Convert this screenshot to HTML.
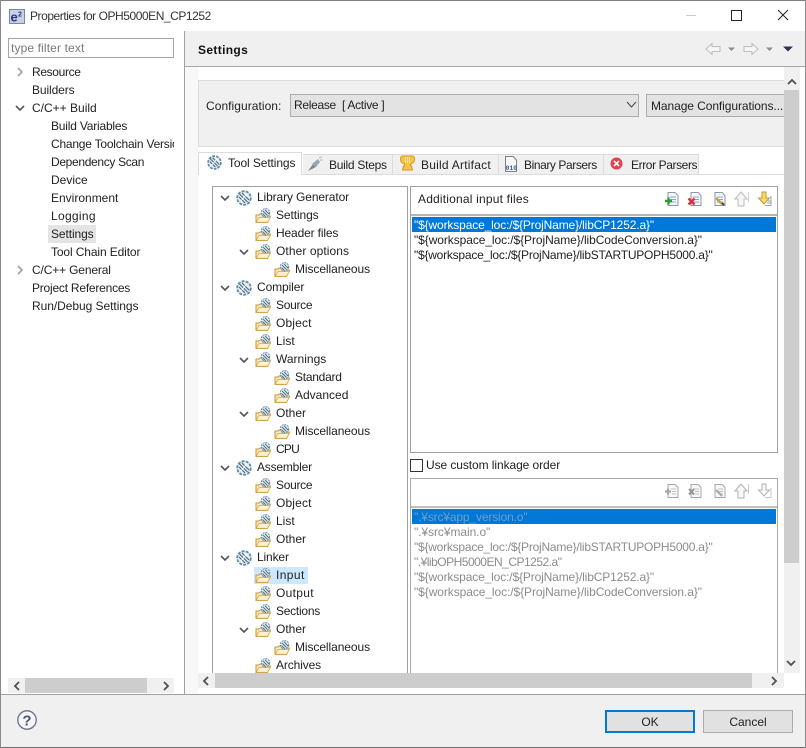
<!DOCTYPE html>
<html><head><meta charset="utf-8"><title>Properties</title>
<style>
html,body{margin:0;padding:0;background:#fff}
#w{position:relative;width:806px;height:748px;overflow:hidden;background:#fff;font-family:"Liberation Sans",sans-serif;font-size:12px;color:#222}
#w div,#w span,#w svg{position:absolute}
.t{white-space:nowrap;line-height:16px;height:16px}
.g{color:#8c8c8c}
</style></head><body><div id="w">
<svg width="0" height="0" style="left:0;top:0"><defs>
<symbol id="tool" viewBox="0 0 16 16"><circle cx="8" cy="8" r="6.8" fill="#e4eef5" stroke="#5f8aa8" stroke-width="1.8" stroke-dasharray="3 1.2"/><path d="M3.5 4 L11.5 12 M6 3 L13 10 M3 7 L9 13" stroke="#4f6b7b" stroke-width="1.2" fill="none"/><path d="M11 3.5 L5 11" stroke="#fff" stroke-width="1"/></symbol>
<symbol id="fold" viewBox="0 0 16 16"><path d="M1 14.5 L1 7 L4 7 L5 6 L8 6 L8 8 L15.5 8 L12.5 14.5 Z" fill="#fbe5b0" stroke="#c9973f" stroke-width="1"/><path d="M1.2 14.3 L4 9.5 L15.3 9.5 L12.5 14.3 Z" fill="#fdf1d0" stroke="#d6a850" stroke-width=".8"/><circle cx="10.5" cy="4.8" r="4.2" fill="#e8f0f6" stroke="#5f8aa8" stroke-width="1" stroke-dasharray="2 .8"/><path d="M8 3 L12.5 7.5 M10 1.8 L14 6 M7.5 5.5 L10.5 8.5" stroke="#4f6b7b" stroke-width="1"/></symbol>
<symbol id="ch" viewBox="0 0 10 10"><path d="M1 3 L5 7 L9 3" fill="none" stroke="#555" stroke-width="1.6"/></symbol>
<symbol id="cr" viewBox="0 0 10 10"><path d="M3 1 L7 5 L3 9" fill="none" stroke="#a0a0a0" stroke-width="1.6"/></symbol>
<symbol id="dc" viewBox="0 0 16 16"><path d="M4 1.5 H11 L14 4.5 V14.5 H4 Z" fill="#f4f6fa" stroke="#8a9aa5"/><path d="M6 6 H12 M6 8.5 H12 M6 11 H12" stroke="#8fa6c8"/></symbol>
<symbol id="dg" viewBox="0 0 16 16"><path d="M4 1.5 H11 L14 4.5 V14.5 H4 Z" fill="#f8f8f8" stroke="#a8a8a8"/><path d="M7 6 H12 M8 8.5 H12 M8 11 H12" stroke="#c0c0c0"/></symbol>
</defs></svg>

<!-- frame and title -->
<div style="left:0;top:0;width:806px;height:1px;background:#7f7f7f"></div>
<svg style="left:9px;top:9px" width="16" height="15"><rect x=".5" y=".5" width="15" height="14" fill="#c6d0e6" stroke="#7a86a8"/><text x="1.5" y="12.5" font-family="Liberation Sans" font-weight="700" font-size="13" fill="#28387f">e</text><text x="9" y="7.5" font-family="Liberation Sans" font-weight="700" font-size="7" fill="#28387f">2</text></svg>
<span class="t" style="left:30px;top:8px;color:#333;letter-spacing:-.45px">Properties for OPH5000EN_CP1252</span>
<div style="left:686px;top:15px;width:10px;height:1px;background:#ccc"></div>
<div style="left:731px;top:10px;width:9px;height:9px;border:1px solid #222"></div>
<svg style="left:777px;top:9px" width="12" height="12"><path d="M1 1 L11 11 M11 1 L1 11" stroke="#222" stroke-width="1"/></svg>

<!-- left pane -->
<div style="left:8px;top:38px;width:164px;height:18px;border:1px solid #a5a5a5"></div>
<span class="t" style="left:11px;top:40px;color:#7a7a7a;letter-spacing:.13px">type filter text</span>
<div style="left:48px;top:225px;width:48px;height:18px;background:#e4e4e4"></div>
<svg style="left:15px;top:67px" width="10" height="10"><use href="#cr"/></svg>
<svg style="left:15px;top:103px" width="10" height="10"><use href="#ch"/></svg>
<svg style="left:15px;top:265px" width="10" height="10"><use href="#cr"/></svg>
<span class="t" style="left:32px;top:64px;letter-spacing:-.35px">Resource</span>
<span class="t" style="left:32px;top:82px;letter-spacing:-.1px">Builders</span>
<span class="t" style="left:32px;top:100px">C/C++ Build</span>
<span class="t" style="left:51px;top:118px;letter-spacing:-.2px">Build Variables</span>
<div style="left:51px;top:136px;width:123px;height:16px;overflow:hidden"><span class="t" style="left:0;top:0;letter-spacing:-.22px">Change Toolchain Version</span></div>
<span class="t" style="left:51px;top:154px;letter-spacing:-.33px">Dependency Scan</span>
<span class="t" style="left:51px;top:172px">Device</span>
<span class="t" style="left:51px;top:190px">Environment</span>
<span class="t" style="left:51px;top:208px;letter-spacing:.3px">Logging</span>
<span class="t" style="left:51px;top:226px;letter-spacing:-.1px">Settings</span>
<span class="t" style="left:51px;top:244px;letter-spacing:-.12px">Tool Chain Editor</span>
<span class="t" style="left:32px;top:262px;letter-spacing:-.15px">C/C++ General</span>
<span class="t" style="left:32px;top:280px;letter-spacing:-.22px">Project References</span>
<span class="t" style="left:32px;top:298px;letter-spacing:-.05px">Run/Debug Settings</span>
<div style="left:8px;top:678px;width:166px;height:15px;background:#f0f0f0"></div>
<div style="left:25px;top:678px;width:122px;height:15px;background:#cdcdcd"></div>
<svg style="left:12px;top:681px" width="10" height="10"><path d="M7 1 L3 5 L7 9" fill="none" stroke="#505050" stroke-width="1.8"/></svg>
<svg style="left:161px;top:681px" width="10" height="10"><path d="M3 1 L7 5 L3 9" fill="none" stroke="#505050" stroke-width="1.8"/></svg>
<div style="left:184px;top:31px;width:1px;height:664px;background:#a0a0a0"></div>

<!-- right pane header -->
<div style="left:185px;top:31px;width:620px;height:35px;background:#f0f0f0"></div>
<div style="left:185px;top:66px;width:620px;height:1px;background:#a8a8a8"></div>
<span class="t" style="left:198px;top:42px;font-weight:700;color:#111;letter-spacing:.35px">Settings</span>
<svg style="left:705px;top:42px" width="90" height="14"><path d="M1 7 L7 1.5 V4.5 H15 V9.5 H7 V12.5 Z" fill="#f6f6f6" stroke="#bdbdbd"/><path d="M23 5.5 H30 L26.5 9 Z" fill="#8c8c8c"/><path d="M53 7 L47 1.5 V4.5 H39 V9.5 H47 V12.5 Z" fill="#f6f6f6" stroke="#bdbdbd"/><path d="M61 5.5 H68 L64.5 9 Z" fill="#8c8c8c"/><path d="M78 4.5 H88 L83 9.5 Z" fill="#3a2c52"/></svg>
<div style="left:185px;top:67px;width:620px;height:628px;background:#fff"></div>
<div style="left:185px;top:67px;width:13px;height:628px;background:#f8f8f8"></div>

<!-- config group -->
<div style="left:198px;top:80px;width:586px;height:65px;background:#f0f0f0;border:1px solid #dcdcdc;border-right:0"></div>
<span class="t" style="left:206px;top:98px;letter-spacing:.05px">Configuration:</span>
<div style="left:290px;top:94px;width:347px;height:21px;background:#e3e3e3;border:1px solid #adadad"></div>
<span class="t" style="left:294px;top:97px;letter-spacing:-.3px">Release&nbsp; [ Active ]</span>
<svg style="left:626px;top:101px" width="11" height="8"><path d="M1 1 L5.5 6 L10 1" fill="none" stroke="#444" stroke-width="1"/></svg>
<div style="left:646px;top:94px;width:140px;height:21px;background:#e3e3e3;border:1px solid #adadad"></div>
<span class="t" style="left:651px;top:98px;width:133px;overflow:hidden;letter-spacing:-.08px">Manage Configurations...</span>

<!-- tabs -->
<div style="left:303px;top:154px;width:396px;height:20px;background:#f0f0f0;border-top:1px solid #dcdcdc;border-right:1px solid #dcdcdc;box-sizing:border-box"></div>
<div style="left:198px;top:174px;width:587px;height:1px;background:#dcdcdc"></div>
<div style="left:198px;top:152px;width:104px;height:23px;background:#fff;border:1px solid #dcdcdc;border-bottom:0;box-sizing:border-box"></div>
<div style="left:392px;top:154px;width:1px;height:20px;background:#dcdcdc"></div>
<div style="left:498px;top:154px;width:1px;height:20px;background:#dcdcdc"></div>
<div style="left:603px;top:154px;width:1px;height:20px;background:#dcdcdc"></div>
<svg style="left:207px;top:155px" width="15" height="15"><use href="#tool"/></svg>
<span class="t" style="left:228px;top:155px;letter-spacing:-.1px">Tool Settings</span>
<svg style="left:307px;top:156px" width="16" height="16"><path d="M1 15 L6 8 L9 11 Z" fill="#7d8a96"/><path d="M5 8 L11 3 L13 6 L9 11 Z" fill="#9aa6b2"/><path d="M12 2 L15 1 M13 4 L16 4" stroke="#b4bcc4"/></svg>
<span class="t" style="left:329px;top:157px;letter-spacing:-.27px">Build Steps</span>
<svg style="left:400px;top:155px" width="15" height="16"><path d="M3 1 H12 Q14.5 1 14.5 4 Q14.5 8 10.5 9 V11 H11.5 L12.5 15 H2.5 L3.5 11 H4.5 V9 Q.5 8 .5 4 Q.5 1 3 1 Z" fill="#f6c443" stroke="#d99a20"/><path d="M5.5 2 V8 M7.5 2 V8 M9.5 2 V8" stroke="#fbe6a0"/></svg>
<span class="t" style="left:421px;top:157px;letter-spacing:.23px">Build Artifact</span>
<svg style="left:504px;top:156px" width="14" height="16"><path d="M1.5 .5 H9 L12.5 4 V15.5 H1.5 Z" fill="#f7f7f7" stroke="#75828f"/><text x="1.5" y="14" font-family="Liberation Mono" font-size="6.5" font-weight="700" fill="#3c5a78">010</text></svg>
<span class="t" style="left:524px;top:157px;letter-spacing:-.42px">Binary Parsers</span>
<svg style="left:610px;top:157px" width="13" height="13"><circle cx="6.5" cy="6.5" r="6" fill="#e2434b"/><path d="M4 4 L9 9 M9 4 L4 9" stroke="#fff" stroke-width="1.6"/></svg>
<span class="t" style="left:631px;top:157px;letter-spacing:-.4px">Error Parsers</span>

<!-- tree panel -->
<div style="left:212px;top:186px;width:194px;height:486px;border:1px solid #a0a0a0;border-bottom:0;overflow:hidden;background:#fff">
<div style="left:41px;top:380px;width:54px;height:17px;background:#cce8ff"></div>
<svg style="left:7px;top:6px" width="10" height="10"><use href="#ch"/></svg>
<svg style="left:26px;top:60px" width="10" height="10"><use href="#ch"/></svg>
<svg style="left:7px;top:96px" width="10" height="10"><use href="#ch"/></svg>
<svg style="left:26px;top:168px" width="10" height="10"><use href="#ch"/></svg>
<svg style="left:26px;top:222px" width="10" height="10"><use href="#ch"/></svg>
<svg style="left:7px;top:276px" width="10" height="10"><use href="#ch"/></svg>
<svg style="left:7px;top:366px" width="10" height="10"><use href="#ch"/></svg>
<svg style="left:26px;top:438px" width="10" height="10"><use href="#ch"/></svg>

<svg style="left:23px;top:3px" width="16" height="16"><use href="#tool"/></svg><span class="t" style="left:44px;top:2px;letter-spacing:-.12px">Library Generator</span>
<svg style="left:42px;top:21px" width="16" height="16"><use href="#fold"/></svg><span class="t" style="left:63px;top:20px;letter-spacing:-.1px">Settings</span>
<svg style="left:42px;top:39px" width="16" height="16"><use href="#fold"/></svg><span class="t" style="left:63px;top:38px;letter-spacing:-.15px">Header files</span>
<svg style="left:42px;top:57px" width="16" height="16"><use href="#fold"/></svg><span class="t" style="left:63px;top:56px;letter-spacing:.08px">Other options</span>
<svg style="left:61px;top:75px" width="16" height="16"><use href="#fold"/></svg><span class="t" style="left:82px;top:74px;letter-spacing:-.08px">Miscellaneous</span>
<svg style="left:23px;top:93px" width="16" height="16"><use href="#tool"/></svg><span class="t" style="left:44px;top:92px;letter-spacing:-.1px">Compiler</span>
<svg style="left:42px;top:111px" width="16" height="16"><use href="#fold"/></svg><span class="t" style="left:63px;top:110px;letter-spacing:-.3px">Source</span>
<svg style="left:42px;top:129px" width="16" height="16"><use href="#fold"/></svg><span class="t" style="left:63px;top:128px;letter-spacing:.15px">Object</span>
<svg style="left:42px;top:147px" width="16" height="16"><use href="#fold"/></svg><span class="t" style="left:63px;top:146px">List</span>
<svg style="left:42px;top:165px" width="16" height="16"><use href="#fold"/></svg><span class="t" style="left:63px;top:164px">Warnings</span>
<svg style="left:61px;top:183px" width="16" height="16"><use href="#fold"/></svg><span class="t" style="left:82px;top:182px;letter-spacing:-.25px">Standard</span>
<svg style="left:61px;top:201px" width="16" height="16"><use href="#fold"/></svg><span class="t" style="left:82px;top:200px">Advanced</span>
<svg style="left:42px;top:219px" width="16" height="16"><use href="#fold"/></svg><span class="t" style="left:63px;top:218px">Other</span>
<svg style="left:61px;top:237px" width="16" height="16"><use href="#fold"/></svg><span class="t" style="left:82px;top:236px;letter-spacing:-.08px">Miscellaneous</span>
<svg style="left:42px;top:255px" width="16" height="16"><use href="#fold"/></svg><span class="t" style="left:63px;top:254px;letter-spacing:-.8px">CPU</span>
<svg style="left:23px;top:273px" width="16" height="16"><use href="#tool"/></svg><span class="t" style="left:44px;top:272px;letter-spacing:-.2px">Assembler</span>
<svg style="left:42px;top:291px" width="16" height="16"><use href="#fold"/></svg><span class="t" style="left:63px;top:290px;letter-spacing:-.3px">Source</span>
<svg style="left:42px;top:309px" width="16" height="16"><use href="#fold"/></svg><span class="t" style="left:63px;top:308px;letter-spacing:.15px">Object</span>
<svg style="left:42px;top:327px" width="16" height="16"><use href="#fold"/></svg><span class="t" style="left:63px;top:326px">List</span>
<svg style="left:42px;top:345px" width="16" height="16"><use href="#fold"/></svg><span class="t" style="left:63px;top:344px">Other</span>
<svg style="left:23px;top:363px" width="16" height="16"><use href="#tool"/></svg><span class="t" style="left:44px;top:362px;letter-spacing:-.15px">Linker</span>
<svg style="left:42px;top:381px" width="16" height="16"><use href="#fold"/></svg><span class="t" style="left:63px;top:380px;letter-spacing:.4px">Input</span>
<svg style="left:42px;top:399px" width="16" height="16"><use href="#fold"/></svg><span class="t" style="left:63px;top:398px;letter-spacing:.3px">Output</span>
<svg style="left:42px;top:417px" width="16" height="16"><use href="#fold"/></svg><span class="t" style="left:63px;top:416px;letter-spacing:-.25px">Sections</span>
<svg style="left:42px;top:435px" width="16" height="16"><use href="#fold"/></svg><span class="t" style="left:63px;top:434px">Other</span>
<svg style="left:61px;top:453px" width="16" height="16"><use href="#fold"/></svg><span class="t" style="left:82px;top:452px;letter-spacing:-.08px">Miscellaneous</span>
<svg style="left:42px;top:471px" width="16" height="16"><use href="#fold"/></svg><span class="t" style="left:63px;top:470px;letter-spacing:-.12px">Archives</span>
</div>

<!-- additional input panel -->
<div style="left:410px;top:186px;width:366px;height:265px;border:1px solid #a0a0a0"></div>
<div style="left:411px;top:214px;width:366px;height:2px;background:#b4b4b4"></div>
<span class="t" style="left:418px;top:191px;letter-spacing:.19px">Additional input files</span>
<svg style="left:664px;top:191px" width="16" height="16"><use href="#dc"/><path d="M0 10 H7 M3.5 6.5 V13.5" stroke="#2f9a3a" stroke-width="2.4" transform="translate(1,0)"/></svg>
<svg style="left:687px;top:191px" width="16" height="16"><use href="#dc"/><path d="M1.5 7.5 L7.5 13.5 M7.5 7.5 L1.5 13.5" stroke="#d9303a" stroke-width="2.4"/></svg>
<svg style="left:711px;top:191px" width="16" height="16"><use href="#dc"/><path d="M5 7 L11 13" stroke="#c9a040" stroke-width="2.4"/><path d="M11 12 L13 14" stroke="#444" stroke-width="2"/></svg>
<svg style="left:733px;top:191px" width="16" height="16"><path d="M8 1 L14 8 H11 V15 H5 V8 H2 Z" fill="#f6f6f6" stroke="#bdbdbd"/><path d="M15.5 1 V11" stroke="#cfcfcf"/></svg>
<svg style="left:756px;top:191px" width="16" height="16"><path d="M6 1 H10 V7 H13.5 L8 13 L2.5 7 H6 Z" fill="#f7d873" stroke="#c79a2c"/><path d="M9 14.5 H15 V5 M12 10 H15 M11 12 H15" fill="none" stroke="#8fa6c8"/></svg>

<div style="left:412px;top:217px;width:364px;height:15px;background:#0078d7"></div>
<span class="t" style="left:414px;top:217px;color:#fff;letter-spacing:-.14px">"${workspace_loc:/${ProjName}/libCP1252.a}"</span>
<span class="t" style="left:414px;top:232px;letter-spacing:-.08px">"${workspace_loc:/${ProjName}/libCodeConversion.a}"</span>
<span class="t" style="left:414px;top:247px;letter-spacing:-.23px">"${workspace_loc:/${ProjName}/libSTARTUPOPH5000.a}"</span>

<div style="left:410px;top:459px;width:11px;height:11px;border:1px solid #333;background:#fff"></div>
<span class="t" style="left:426px;top:457px;letter-spacing:-.08px">Use custom linkage order</span>

<!-- linkage panel -->
<div style="left:410px;top:478px;width:366px;height:194px;border:1px solid #a8a8a8;border-bottom:0"></div>
<div style="left:411px;top:506px;width:366px;height:2px;background:#c0c0c0"></div>
<svg style="left:664px;top:483px" width="16" height="16"><use href="#dg"/><path d="M1 8.5 H7 M4 5.5 V11.5" stroke="#a8a8a8" stroke-width="2.2"/></svg>
<svg style="left:687px;top:483px" width="16" height="16"><use href="#dg"/><path d="M2 6 L7 11.5 M7 6 L2 11.5" stroke="#989898" stroke-width="2.2"/></svg>
<svg style="left:711px;top:483px" width="16" height="16"><use href="#dg"/><path d="M5 7 L11 13" stroke="#aaa" stroke-width="2.2"/></svg>
<svg style="left:733px;top:483px" width="16" height="16"><path d="M8 1 L14 8 H11 V15 H5 V8 H2 Z" fill="#f8f8f8" stroke="#b0b0b0"/><path d="M15.5 1 V11" stroke="#c8c8c8"/></svg>
<svg style="left:756px;top:483px" width="16" height="16"><path d="M6 1 H10 V7 H13.5 L8 13 L2.5 7 H6 Z" fill="#f8f8f8" stroke="#b0b0b0"/><path d="M9 14.5 H15 V5" fill="none" stroke="#c8c8c8"/></svg>

<div style="left:412px;top:509px;width:364px;height:15px;background:#0078d7"></div>
<span class="t" style="left:414px;top:509px;color:#6f9fc8;letter-spacing:-.15px">".¥src¥app_version.o"</span>
<span class="t g" style="left:414px;top:524px;letter-spacing:-.07px">".¥src¥main.o"</span>
<span class="t g" style="left:414px;top:539px;letter-spacing:-.23px">"${workspace_loc:/${ProjName}/libSTARTUPOPH5000.a}"</span>
<span class="t g" style="left:414px;top:554px;letter-spacing:-.5px">".¥libOPH5000EN_CP1252.a"</span>
<span class="t g" style="left:414px;top:569px;letter-spacing:-.14px">"${workspace_loc:/${ProjName}/libCP1252.a}"</span>
<span class="t g" style="left:414px;top:584px;letter-spacing:-.08px">"${workspace_loc:/${ProjName}/libCodeConversion.a}"</span>

<!-- vertical scrollbar -->
<div style="left:784px;top:67px;width:16px;height:606px;background:#f0f0f0"></div>
<div style="left:784px;top:90px;width:15px;height:473px;background:#cdcdcd"></div>
<svg style="left:787px;top:77px" width="10" height="10"><path d="M1 7 L5 3 L9 7" fill="none" stroke="#505050" stroke-width="1.8"/></svg>
<svg style="left:786px;top:658px" width="10" height="10"><path d="M1 3 L5 7 L9 3" fill="none" stroke="#505050" stroke-width="1.8"/></svg>

<!-- horizontal scrollbar -->
<div style="left:198px;top:673px;width:586px;height:15px;background:#f0f0f0"></div>
<div style="left:215px;top:673px;width:537px;height:15px;background:#cdcdcd"></div>
<svg style="left:201px;top:676px" width="10" height="10"><path d="M7 1 L3 5 L7 9" fill="none" stroke="#505050" stroke-width="1.8"/></svg>
<svg style="left:769px;top:676px" width="10" height="10"><path d="M3 1 L7 5 L3 9" fill="none" stroke="#505050" stroke-width="1.8"/></svg>

<!-- footer -->
<div style="left:0;top:694px;width:806px;height:1px;background:#a0a0a0"></div>
<div style="left:0;top:695px;width:806px;height:52px;background:#f0f0f0"></div>
<svg style="left:17px;top:710px" width="20" height="20"><circle cx="10" cy="10" r="9.2" fill="#f6f6f8" stroke="#66708a" stroke-width="1.3"/><text x="10" y="15.5" text-anchor="middle" font-family="Liberation Sans" font-weight="700" font-size="15" fill="#4a5470">?</text></svg>
<div style="left:605px;top:710px;width:86px;height:19px;background:#e1e1e1;border:2px solid #0078d7"></div>
<span class="t" style="left:605px;top:714px;width:90px;text-align:center">OK</span>
<div style="left:703px;top:710px;width:88px;height:21px;background:#e1e1e1;border:1px solid #adadad"></div>
<span class="t" style="left:703px;top:714px;width:90px;text-align:center">Cancel</span>

<div style="left:0;top:747px;width:806px;height:1px;background:#6f6f6f"></div>
<div style="left:0;top:0;width:1px;height:748px;background:#8a8a8a"></div>
<div style="left:805px;top:0;width:1px;height:748px;background:#8a8a8a"></div>
</div></body></html>
